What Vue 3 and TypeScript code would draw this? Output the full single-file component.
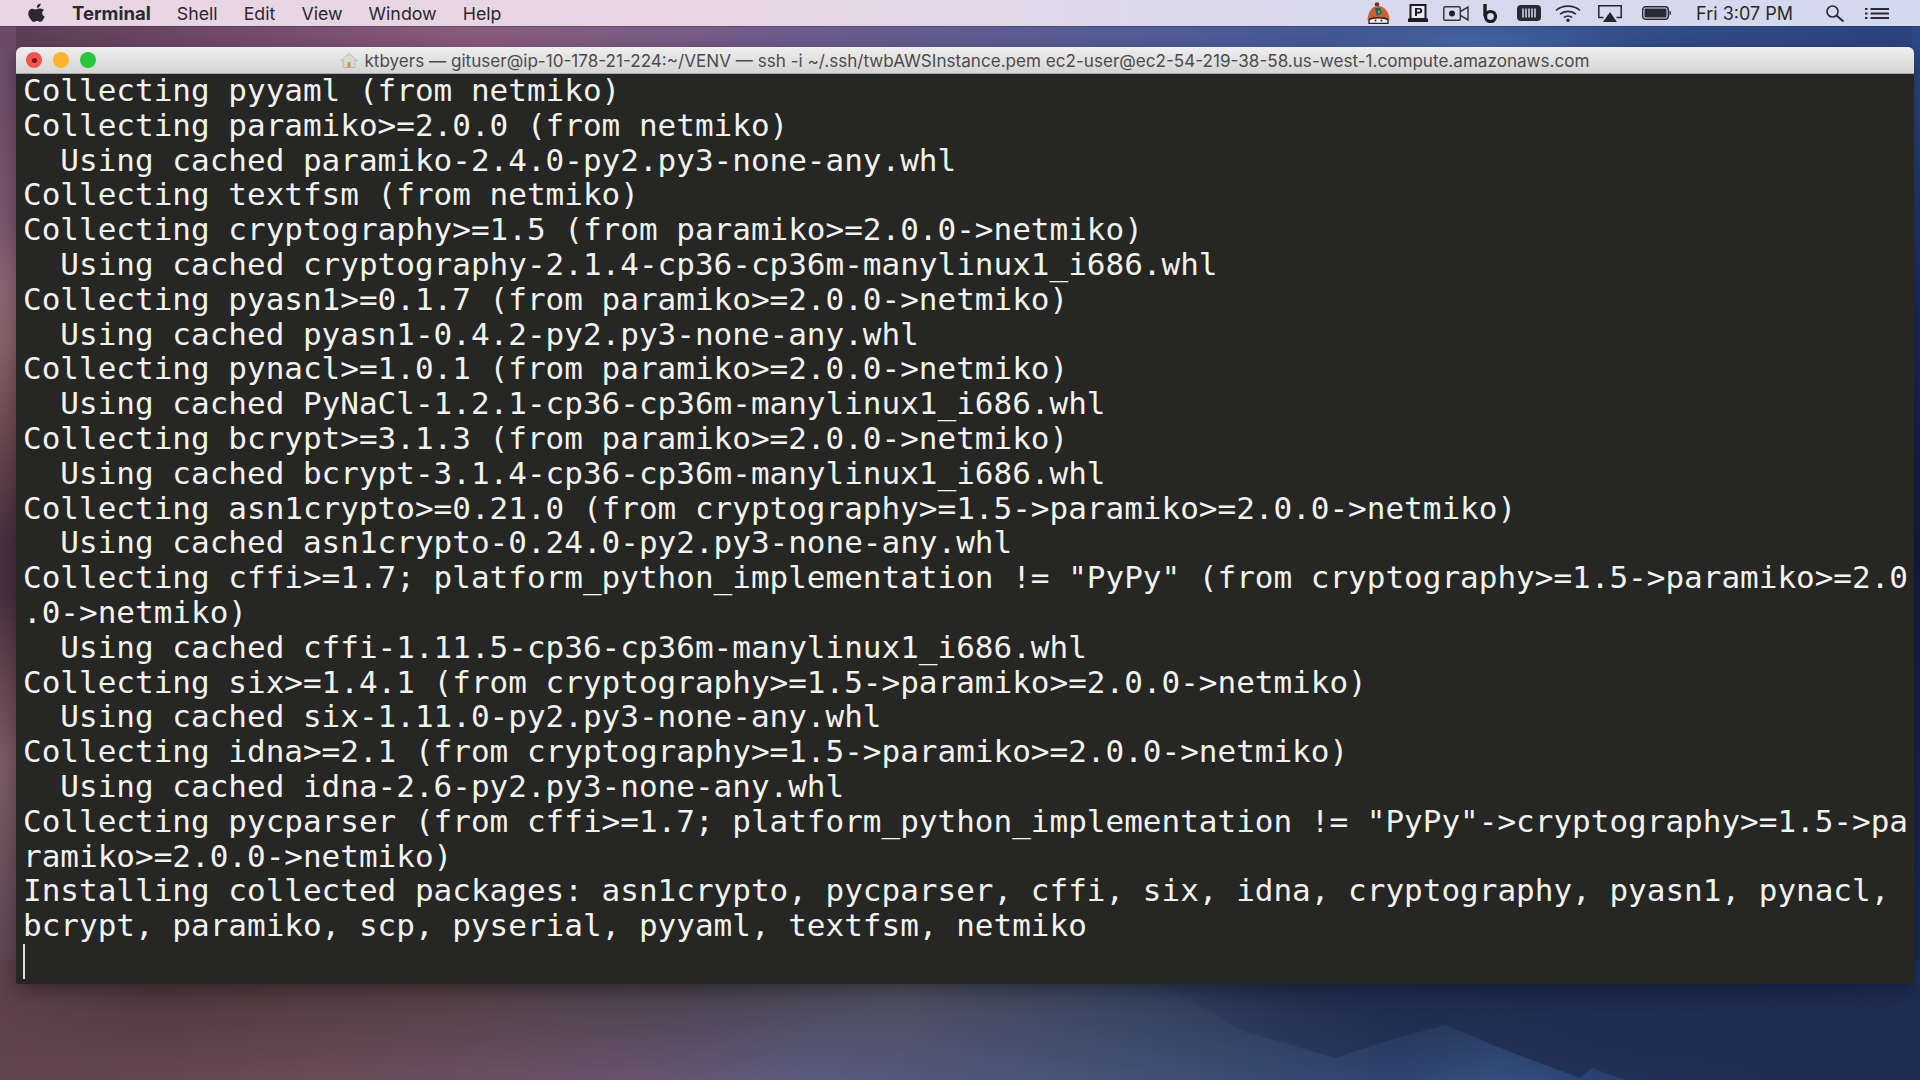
<script setup lang="ts">
const lines: string[] = [
  'Collecting pyyaml (from netmiko)',
  'Collecting paramiko>=2.0.0 (from netmiko)',
  '  Using cached paramiko-2.4.0-py2.py3-none-any.whl',
  'Collecting textfsm (from netmiko)',
  'Collecting cryptography>=1.5 (from paramiko>=2.0.0->netmiko)',
  '  Using cached cryptography-2.1.4-cp36-cp36m-manylinux1_i686.whl',
  'Collecting pyasn1>=0.1.7 (from paramiko>=2.0.0->netmiko)',
  '  Using cached pyasn1-0.4.2-py2.py3-none-any.whl',
  'Collecting pynacl>=1.0.1 (from paramiko>=2.0.0->netmiko)',
  '  Using cached PyNaCl-1.2.1-cp36-cp36m-manylinux1_i686.whl',
  'Collecting bcrypt>=3.1.3 (from paramiko>=2.0.0->netmiko)',
  '  Using cached bcrypt-3.1.4-cp36-cp36m-manylinux1_i686.whl',
  'Collecting asn1crypto>=0.21.0 (from cryptography>=1.5->paramiko>=2.0.0->netmiko)',
  '  Using cached asn1crypto-0.24.0-py2.py3-none-any.whl',
  'Collecting cffi>=1.7; platform_python_implementation != "PyPy" (from cryptography>=1.5->paramiko>=2.0',
  '.0->netmiko)',
  '  Using cached cffi-1.11.5-cp36-cp36m-manylinux1_i686.whl',
  'Collecting six>=1.4.1 (from cryptography>=1.5->paramiko>=2.0.0->netmiko)',
  '  Using cached six-1.11.0-py2.py3-none-any.whl',
  'Collecting idna>=2.1 (from cryptography>=1.5->paramiko>=2.0.0->netmiko)',
  '  Using cached idna-2.6-py2.py3-none-any.whl',
  'Collecting pycparser (from cffi>=1.7; platform_python_implementation != "PyPy"->cryptography>=1.5->pa',
  'ramiko>=2.0.0->netmiko)',
  'Installing collected packages: asn1crypto, pycparser, cffi, six, idna, cryptography, pyasn1, pynacl,',
  'bcrypt, paramiko, scp, pyserial, pyyaml, textfsm, netmiko',
]
const menus: string[] = ['Shell', 'Edit', 'View', 'Window', 'Help']
</script>

<template>
  <div class="desktop">
    <div class="wall-top"></div>
    <div class="wall-bottom"></div>
    <svg class="wall-shapes" viewBox="0 0 1920 1080" aria-hidden="true">
      <defs>
        <linearGradient id="ridge" gradientUnits="userSpaceOnUse" x1="1163" y1="0" x2="1420" y2="0">
          <stop offset="0" stop-color="#1d2b4e" stop-opacity="0.1" />
          <stop offset="1" stop-color="#1d2b4e" stop-opacity="0.75" />
        </linearGradient>
      </defs>
      <path d="M1163 984L1240 1030 1335 1058 1390 1040 1445 1025 1510 1052 1580 1078 1592 1068 1625 1080H1920V984Z" fill="url(#ridge)" />
    </svg>
    <header class="menubar">
      <div class="menu-left">
        <svg class="apple" viewBox="0 0 20 23" aria-hidden="true">
          <path d="M14.200 0.500c.1 1.400-.4 2.600-1.200 3.500-.8.900-2 1.600-3.200 1.500-.2-1.300.5-2.700 1.200-3.500C11.800 1.200 13.100.6 14.200.5zM18.200 7.800c-1.400.9-2.200 2.100-2.200 3.700 0 1.900 1.100 3.300 2.900 4-.4 1.200-1 2.400-1.800 3.500-1 1.400-2 2.700-3.500 2.700s-1.900-.9-3.600-.9c-1.700 0-2.300.9-3.600.9-1.500 0-2.500-1.400-3.500-2.800C.8 17 0 14.500 0 12.200c0-3.700 2.400-5.700 4.800-5.700 1.500 0 2.700 1 3.700 1 .9 0 2.300-1.100 4-1.100 1.600 0 3.600.5 5.700 1.400z" fill="#2c2730" />
        </svg>
        <span class="app-name">Terminal</span>
        <span v-for="m in menus" :key="m" class="menu-item">{{ m }}</span>
      </div>
      <div class="menu-right">
        <svg class="ic i-person" viewBox="0 0 25 22" aria-hidden="true">
          <circle cx="11" cy="2.500" r="2.300" fill="#5a3a30" />
          <path d="M1.500 18C2 10 6 4 12 4s11 5 11.500 14z" fill="#c9622d" />
          <path d="M9 6h5l2 5-5 3z" fill="#1f5d5f" />
          <path d="M12 8l3 2-3 2z" fill="#4fb56a" />
          <path d="M3 21.500V18c3-3 16-3 19 0v3.500z" fill="#f3f0f4" stroke="#2b2429" stroke-width="1.300" />
          <circle cx="9.500" cy="18.500" r="1" fill="#2b2429" />
          <circle cx="15.500" cy="18.500" r="1" fill="#2b2429" />
        </svg>
        <svg class="ic i-p" viewBox="0 0 20 18" aria-hidden="true">
          <path d="M2.500 1h15v14h-15z" fill="#e8e9f4" stroke="#1d1b22" stroke-width="2" />
          <path d="M0 14.500h20V18H0z" fill="#1d1b22" />
          <path d="M7 12V4h4.500a2.700 2.700 0 0 1 0 5.400H9V12zM9 5.600v2.200h2.200a1.100 1.100 0 0 0 0-2.200z" fill="#1d1b22" fill-rule="evenodd" />
        </svg>
        <svg class="ic i-video" viewBox="0 0 26 15" aria-hidden="true">
          <rect x="0.800" y="0.800" width="16.500" height="13.400" rx="1.200" fill="none" stroke="#3a3845" stroke-width="1.500" />
          <circle cx="9" cy="7.500" r="3" fill="#22202a" />
          <path d="M17.500 5.500L25 1v13l-7.500-4.500" fill="none" stroke="#3a3845" stroke-width="1.500" />
        </svg>
        <svg class="ic i-b" viewBox="0 0 15 19" aria-hidden="true">
          <path d="M2 0v12.500" stroke="#1d1b22" stroke-width="3.400" fill="none" />
          <circle cx="7.500" cy="12.500" r="5" fill="none" stroke="#1d1b22" stroke-width="3.200" />
        </svg>
        <svg class="ic i-mem" viewBox="0 0 24 16" aria-hidden="true">
          <rect x="0" y="0" width="24" height="16" rx="4" fill="#2a2832" />
          <path d="M6 3.500v9M9 3.500v9M12 3.500v9M15 3.500v9M18 3.500v9" stroke="#d5d9ee" stroke-width="1.500" />
        </svg>
        <svg class="ic i-wifi" viewBox="0 0 26 17" aria-hidden="true">
          <path d="M1 5.500C7.500-.3 18.500-.3 25 5.500M5 9.200C9.500 5.400 16.500 5.400 21 9.200M9 12.500c2.300-1.700 5.700-1.700 8 0" fill="none" stroke="#2b2933" stroke-width="1.600" />
          <circle cx="13" cy="15.300" r="1.700" fill="#2b2933" />
        </svg>
        <svg class="ic i-air" viewBox="0 0 24 17" aria-hidden="true">
          <path d="M5.500 12.500H.8V.8h22.400v11.700h-4.700" fill="none" stroke="#26242d" stroke-width="1.500" />
          <path d="M12 7l7 10H5z" fill="#26242d" />
        </svg>
        <svg class="ic i-batt" viewBox="0 0 30 14" aria-hidden="true">
          <rect x="0.700" y="0.700" width="25.600" height="12.600" rx="3" fill="none" stroke="#2b2933" stroke-width="1.400" />
          <rect x="2.500" y="2.500" width="22" height="9" rx="1" fill="#2b2933" />
          <path d="M27.500 4.500c2 .4 2 4.600 0 5z" fill="#2b2933" />
        </svg>
        <span class="clock">Fri 3:07 PM</span>
        <svg class="ic i-search" viewBox="0 0 20 17" aria-hidden="true">
          <circle cx="7.500" cy="6.500" r="5.500" fill="none" stroke="#2b2933" stroke-width="1.600" />
          <path d="M11.500 10.500L18.500 16.500" stroke="#2b2933" stroke-width="2" />
        </svg>
        <svg class="ic i-list" viewBox="0 0 24 11" aria-hidden="true">
          <path d="M5.500 1.100H24M5.500 5.500H24M5.500 9.900H24" stroke="#2b2933" stroke-width="2" />
          <path d="M0 1.100h2.500M0 5.500h2.500M0 9.900h2.500" stroke="#2b2933" stroke-width="2" />
        </svg>
      </div>
    </header>

    <main class="window">
      <div class="titlebar">
        <div class="lights">
          <span class="light red"><i></i></span>
          <span class="light yellow"></span>
          <span class="light green"></span>
        </div>
        <div class="title">
          <svg class="home" viewBox="0 0 18 15" aria-hidden="true">
            <path d="M9 .6L.8 7.500h2.400V14.500h11.600V7.500h2.400z" fill="#dcd8d2" stroke="#b8b0a6" stroke-width="0.800" />
            <path d="M7.300 9h3.400v5.500H7.300z" fill="#c2a06c" />
          </svg>
          <span>ktbyers — gituser@ip-10-178-21-224:~/VENV — ssh -i ~/.ssh/twbAWSInstance.pem ec2-user@ec2-54-219-38-58.us-west-1.compute.amazonaws.com</span>
        </div>
      </div>
      <div class="term">
        <div v-for="(l, i) in lines" :key="i" class="line">{{ l }}</div>
        <div class="line"><span class="cursor"></span></div>
      </div>
    </main>
  </div>
</template>

<style>
html, body { margin: 0; padding: 0; background: #333; }
</style>

<style scoped>
.desktop {
  position: relative;
  width: 1920px;
  height: 1080px;
  overflow: hidden;
  display: flex;
  flex-direction: column;
  background: linear-gradient(90deg,
    #60444f 0, #6b4c56 300px, #6a5470 640px, #5c5c80 800px, #465478 1100px,
    #2f4470 1400px, #35507f 1500px, #2a4272 1600px, #22345f 1900px);
}
.wall-top {
  position: absolute;
  left: 0;
  right: 0;
  top: 0;
  height: 960px;
  background:
    linear-gradient(180deg, #6b4b68 30px, #7b5670 220px, #8e6675 290px, #8a6068 345px, #5e3d48 480px, #4a3040 540px, #4a3040 595px, #6b4a55 695px, #7d5c68 763px, #5f4752 960px) left top / 16px 100% no-repeat,
    linear-gradient(180deg, #2c4a8a 40px, #1f2a60 300px, #121a3e 550px, #16204a 650px, #1c2a50 960px) right top / 8px 100% no-repeat,
    radial-gradient(ellipse 160px 26px at 1480px 46px, rgba(96, 128, 190, 0.45), transparent),
    linear-gradient(90deg,
      #5c3d55 0, #744c6c 250px, #8a5c7c 480px, #6d5c8c 800px, #4e5d99 1200px,
      #385490 1500px, #2b4380 1900px);
}
.wall-bottom {
  position: absolute;
  left: 0;
  right: 0;
  top: 960px;
  bottom: 0;
  background: linear-gradient(90deg,
    #5d414c 0, #4f383e 150px, #533f44 450px, #4a4250 700px, #4d4d5c 900px,
    #33405c 1150px, #28324f 1300px, #1c2a4c 1600px, #1f3060 1920px);
  mask-image: linear-gradient(#000 0, #000 30px, transparent 120px);
  -webkit-mask-image: linear-gradient(#000 0, #000 30px, transparent 120px);
}
.wall-shapes {
  position: absolute;
  inset: 0;
  width: 100%;
  height: 100%;
}
.menubar {
  position: relative;
  height: 26px;
  flex: none;
  display: flex;
  justify-content: space-between;
  align-items: center;
  background: linear-gradient(90deg, #e9d5e3 0%, #e8d6e6 40%, #dcd8ec 60%, #d3d9ef 100%);
  box-shadow: 0 1px 0 rgba(30, 30, 60, 0.3);
  font-family: "Inter", "Liberation Sans", sans-serif;
  font-size: 17.800px;
  color: #2c2730;
}
.menu-left {
  display: flex;
  align-items: center;
  gap: 26px;
  padding-left: 28px;
}
.apple {
  display: block;
  width: 18px;
  height: 20px;
}
.app-name {
  font-weight: 700;
  font-size: 18.500px;
}
.menu-right {
  display: flex;
  align-items: center;
  padding-right: 31px;
}
.ic {
  display: block;
  flex: none;
}
.i-person { width: 25px; height: 22px; }
.i-p { width: 20px; height: 18px; margin-left: 17px; }
.i-video { width: 26px; height: 15px; margin-left: 15px; }
.i-b { width: 15px; height: 19px; margin-left: 14px; }
.i-mem { width: 24px; height: 16px; margin-left: 19px; }
.i-wifi { width: 26px; height: 17px; margin-left: 14px; }
.i-air { width: 24px; height: 17px; margin-left: 17px; }
.i-batt { width: 30px; height: 14px; margin-left: 20px; }
.clock { margin-left: 24px; white-space: nowrap; font-size: 18px; }
.i-search { width: 20px; height: 17px; margin-left: 32px; }
.i-list { width: 24px; height: 11px; margin-left: 20px; }
.window {
  position: relative;
  margin: 21px 0 0 16px;
  width: 1898px;
  height: 937px;
  display: flex;
  flex-direction: column;
  border-radius: 6px 6px 2px 2px;
  overflow: hidden;
  box-shadow: 0 6px 20px rgba(0, 0, 0, 0.35);
}
.titlebar {
  position: relative;
  flex: none;
  height: 27px;
  display: flex;
  align-items: center;
  justify-content: center;
  background: linear-gradient(#f0eff0, #d6d5d6);
  border-bottom: 1px solid #a8a7a8;
  box-sizing: border-box;
  font-family: "Inter", "Liberation Sans", sans-serif;
  font-size: 17.100px;
  color: #4c4a4c;
}
.lights {
  position: absolute;
  left: 10px;
  top: 5px;
  display: flex;
  gap: 11px;
}
.light {
  width: 16px;
  height: 16px;
  border-radius: 50%;
  display: flex;
  align-items: center;
  justify-content: center;
}
.light i {
  width: 5px;
  height: 5px;
  border-radius: 50%;
  background: #7a1414;
}
.red { background: #f2544e; }
.yellow { background: #f9b52c; }
.green { background: #27c540; }
.title {
  display: flex;
  align-items: center;
  gap: 6px;
  white-space: nowrap;
}
.home {
  width: 18px;
  height: 15px;
}
.term {
  flex: 1;
  background: #262624;
  color: #f2f2f0;
  padding-left: 7px;
  font-family: "DejaVu Sans Mono", monospace;
  font-size: 31px;
  line-height: 33px;
}
.line {
  white-space: pre;
  height: 34.800px;
}
.cursor {
  display: block;
  width: 2px;
  height: 35px;
  background: #dcdcdc;
}
</style>
